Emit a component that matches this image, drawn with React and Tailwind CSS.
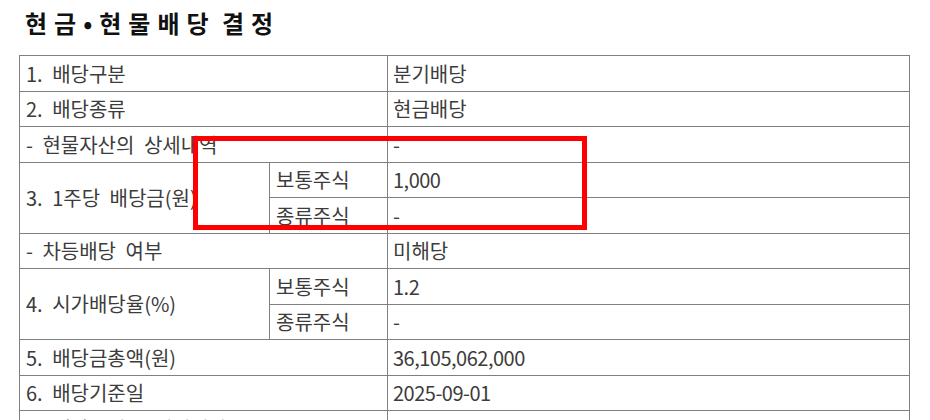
import React from 'react';

const rows = [
  { label: '1. 배당구분', value: '분기배당' },
  { label: '2. 배당종류', value: '현금배당' },
  { label: '- 현물자산의 상세내역', value: '-' },
  { label: '3. 1주당 배당금(원)', subs: [['보통주식', '1,000'], ['종류주식', '-']] },
  { label: '- 차등배당 여부', value: '미해당' },
  { label: '4. 시가배당율(%)', subs: [['보통주식', '1.2'], ['종류주식', '-']] },
  { label: '5. 배당금총액(원)', value: '36,105,062,000' },
  { label: '6. 배당기준일', value: '2025-09-01' },
  { label: '7. 배당금지급 예정일자', value: '' },
];

const cell = 'border-r border-b border-[#808080] flex items-center';
const num = (v) => /\d/.test(v);

const App = () => {
  return (
    <div className="relative w-[930px] h-[420px] overflow-hidden bg-white text-[#3c3c3c] font-['Noto_Sans_CJK_KR',sans-serif]">
      <div className="h-[55px] pt-[8px] pl-[25px]">
        <h1 className="text-[24px] leading-[30px] font-bold tracking-[7px] [word-spacing:-6px] text-[#111]">
          현금<span className="tracking-[7px]">•</span>현물배당 결정
        </h1>
      </div>

      <div className="ml-[19px] w-[891px] grid grid-cols-[250px_118px_522px] grid-rows-[36px_35px_36px_35px_36px_35px_36px_35px_36px_35px_36px] border-l border-t border-[#808080] text-[20px] leading-[24px] [word-spacing:5px]">
        {rows.map((r) =>
          r.subs ? (
            <React.Fragment key={r.label}>
              <div className={`${cell} row-span-2 pl-[6px]`}>{r.label}</div>
              <div className={`${cell} pl-[6px]`}>{r.subs[0][0]}</div>
              <div className={`${cell} pl-[5px] ${num(r.subs[0][1]) ? 'tracking-[-0.5px]' : ''}`}>{r.subs[0][1]}</div>
              <div className={`${cell} pl-[6px]`}>{r.subs[1][0]}</div>
              <div className={`${cell} pl-[5px]`}>{r.subs[1][1]}</div>
            </React.Fragment>
          ) : (
            <React.Fragment key={r.label}>
              <div className={`${cell} col-span-2 pl-[6px]`}>{r.label}</div>
              <div className={`${cell} pl-[5px] ${num(r.value) ? 'tracking-[-0.5px]' : ''}`}>{r.value}</div>
            </React.Fragment>
          )
        )}
      </div>

      {/* highlight box */}
      <div className="absolute left-[193px] top-[136px] w-[394px] h-[94px] border-[5px] border-[#ff0000]" />
    </div>
  );
};

export default App;
